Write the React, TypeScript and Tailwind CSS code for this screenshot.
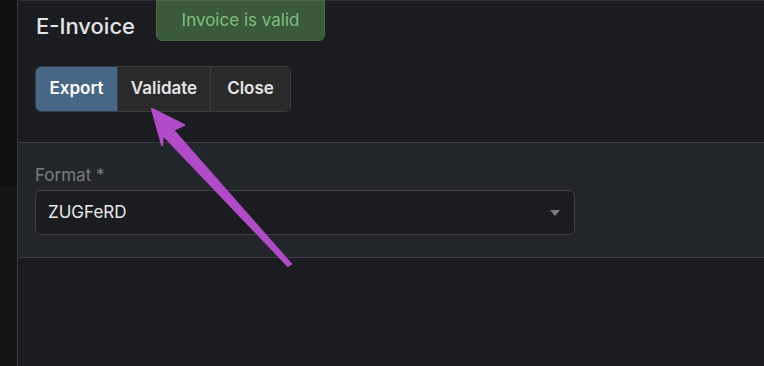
export default function App() {
  return (
    <div className="relative flex h-[366px] w-[764px] overflow-hidden bg-[#1b1c20] font-['Inter',sans-serif]">
      {/* left rail */}
      <div className="flex w-[18px] shrink-0 flex-col border-r border-[#36383c]">
        <div className="h-[186px] bg-[#0f1012]" />
        <div className="flex-1 bg-[#141517]" />
      </div>

      <div className="flex flex-1 flex-col border-t border-[#2b2e33]">
        <div className="flex items-start pl-[18px]">
          <h1 className="w-[120px] shrink-0 pt-[10px] text-[22px] font-medium leading-[30px] text-[#e4e4e6]">E-Invoice</h1>
          <div className="-mt-px flex h-[41px] w-[169px] items-center justify-center rounded-b-[6px] border border-[#4a6a4a] bg-[#3b5a3b] text-[17px] text-[#7fbf7f]">
            Invoice is valid
          </div>
        </div>

        <div className="mt-[25px] flex pl-[17px]">
          <div className="flex h-[46px] overflow-hidden rounded-[6px] border border-[#3a3c40] text-[17px] font-semibold">
            <button className="w-[81px] bg-[#476787] text-white">Export</button>
            <button className="w-[93px] border-l border-[#3a3c40] bg-[#2a2a2b] text-[#e4e4e6]">Validate</button>
            <button className="w-[80px] border-l border-[#3a3c40] bg-[#2a2a2b] text-[#e4e4e6]">Close</button>
          </div>
        </div>

        <div className="mt-[30px] flex h-[116px] flex-col border-y border-[#3a3c40] bg-[#22252a] pl-[17px] pt-[21px]">
          <label className="text-[17px] leading-[22px] text-[#7a7b7e]">Format *</label>
          <div className="mt-[4px] flex h-[45px] w-[540px] items-center justify-between rounded-[6px] border border-[#3e4045] bg-[#1b1c20] pl-[12px] pr-[14px]">
            <span className="text-[17px] text-[#e6e8ea]">ZUGFeRD</span>
            <svg width="10" height="6" viewBox="0 0 10 6">
              <path d="M0 0h10L5 6z" fill="#7b7d80" />
            </svg>
          </div>
        </div>
      </div>

      {/* annotation arrow */}
      <svg className="pointer-events-none absolute left-0 top-0" width="764" height="366" viewBox="0 0 764 366">
        <path d="M152 109 L184 125 L173 130 L291 264 L288 266 L163 135 L162 145 Z" fill="#b14bc8" strokeLinejoin="round" stroke="#b14bc8" strokeWidth="2" />
      </svg>
    </div>
  );
}
